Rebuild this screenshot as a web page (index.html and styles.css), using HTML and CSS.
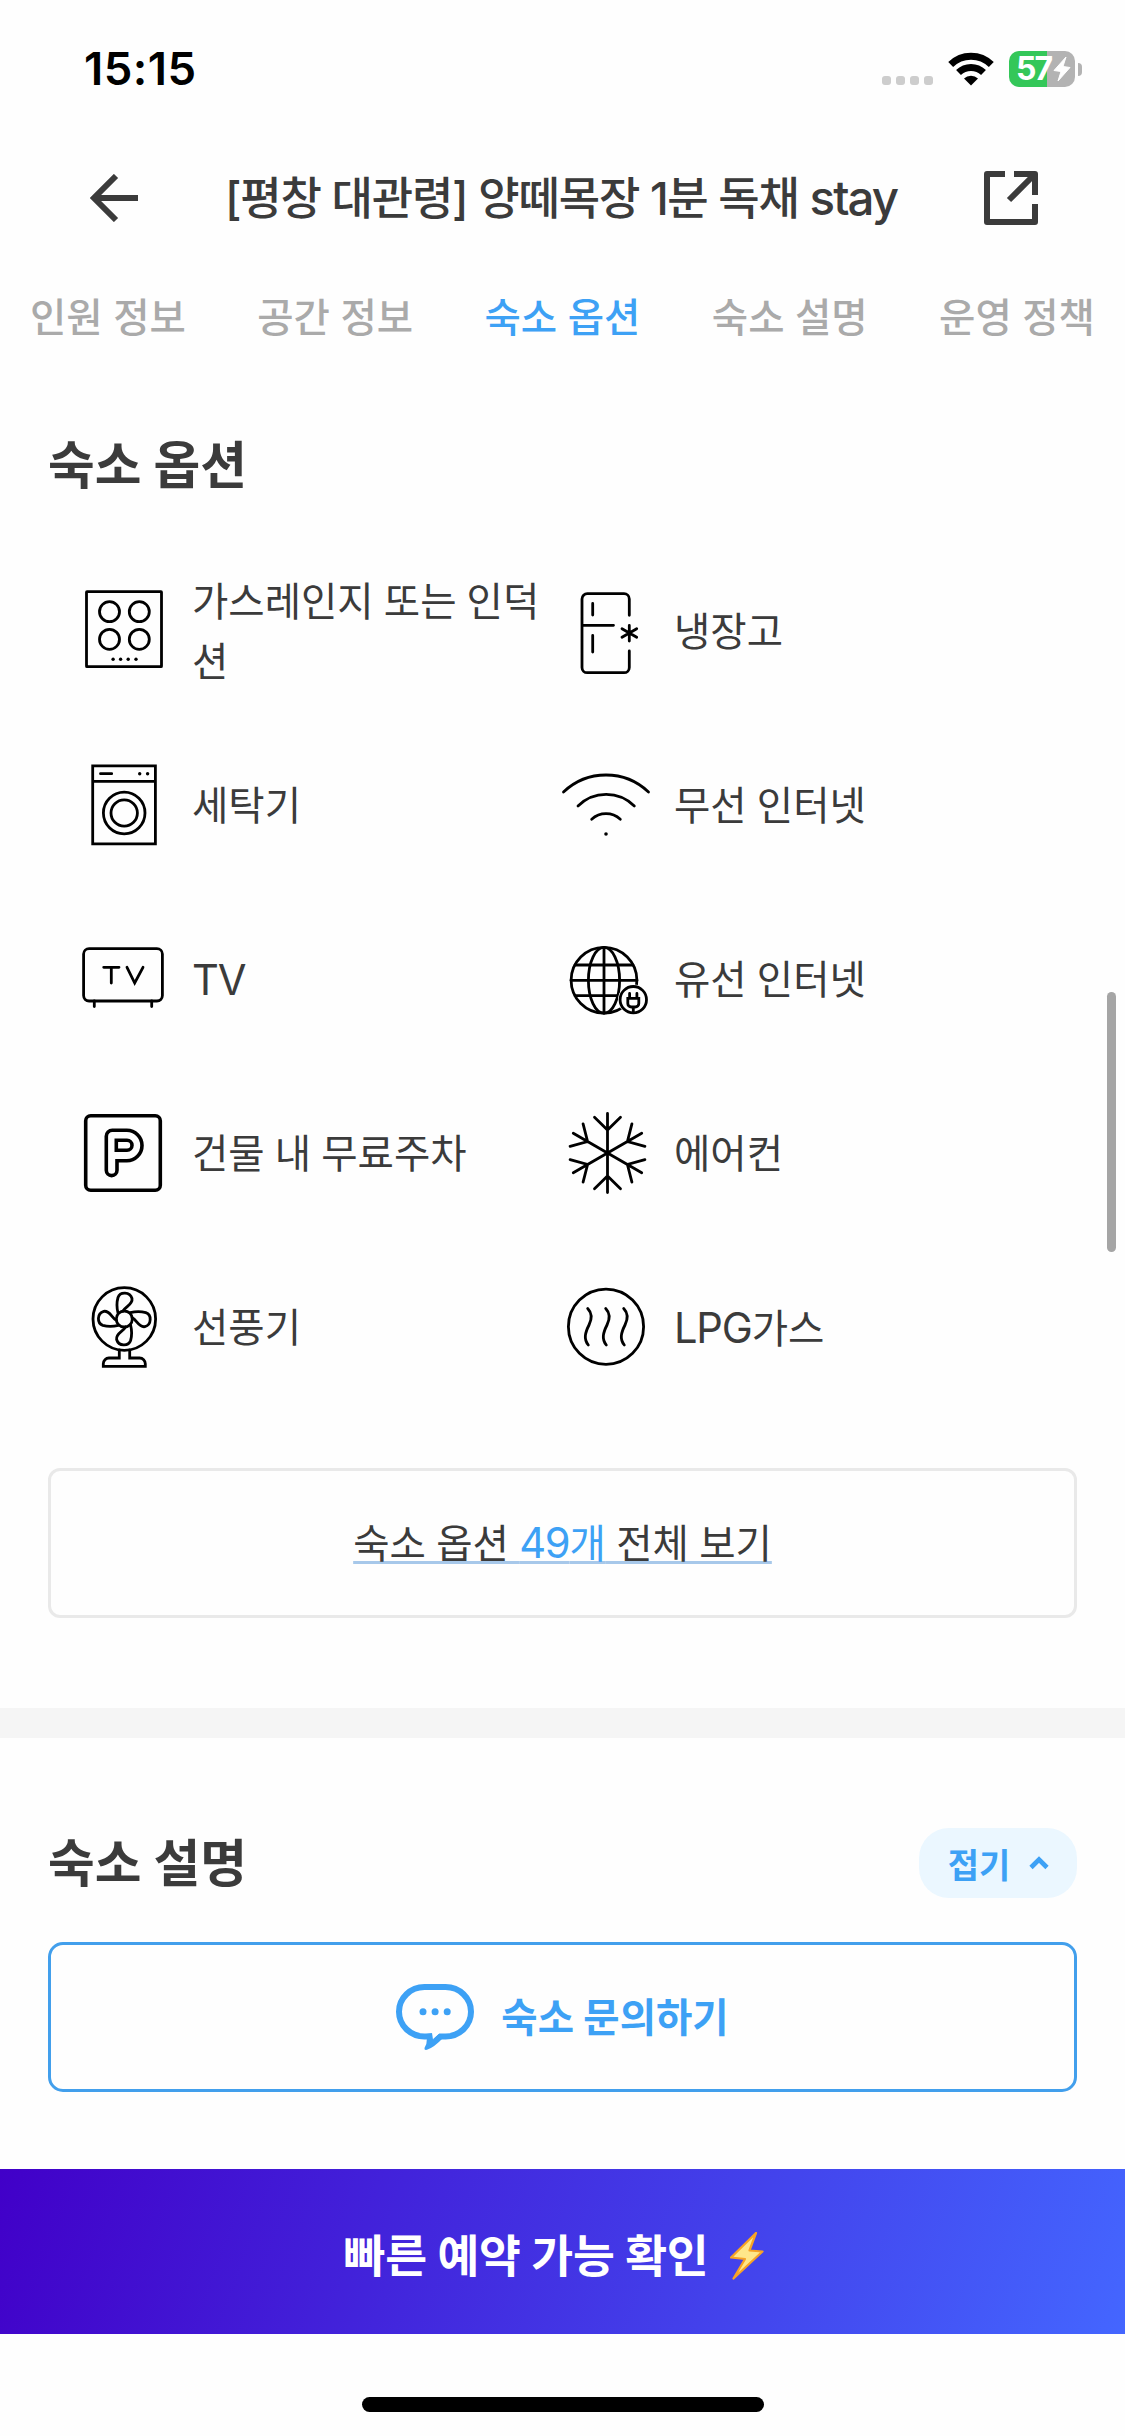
FILE: index.html
```html
<!DOCTYPE html>
<html lang="ko">
<head>
<meta charset="utf-8">
<title>숙소 옵션</title>
<link rel="stylesheet" href="styles.css">
</head>
<body>
<header class="status">
  <span class="time">15:15</span>
  <div class="status-icons">
    <div class="signal"><i></i><i></i><i></i><i></i></div>
    <svg class="wifi" width="46" height="34" viewBox="0 0 46 34">
      <g fill="none" stroke="#000" stroke-width="7"><path d="M2.7 12.6a29 29 0 0 1 40.6 0"/><path d="M10.5 20.6a18 18 0 0 1 25 0"/></g>
      <path d="M23 33.5l-7-7a10 10 0 0 1 14 0z"/>
    </svg>
    <div class="battery">
      <span class="level">57</span>
      <svg width="18" height="26" viewBox="0 0 18 26"><path d="M13 1L1 14.5l7 1L5 25l12-13.500-7-1z" fill="#fff" stroke="#fff" stroke-linejoin="round"/></svg>
    </div>
    <i class="nub"></i>
  </div>
</header>

<nav class="topbar">
  <svg width="48" height="48" viewBox="0 0 48 48" fill="none" stroke="#3b3b3b" stroke-width="6"><path d="M48 24H4M26 2L4 24l22 22"/></svg>
  <h1 class="title">[평창 대관령] 양떼목장 1분 독채 <span class="latin">stay</span></h1>
  <svg width="54" height="54" viewBox="0 0 54 54" fill="none" stroke="#3b3b3b" stroke-width="6" stroke-linejoin="round"><path d="M21 3H3V51H51V33M30 3H51V24M51 3L25 29"/></svg>
</nav>

<nav class="tabs">
  <span>인원 정보</span><span>공간 정보</span><span class="active">숙소 옵션</span><span>숙소 설명</span><span>운영 정책</span>
</nav>

<section class="options">
  <h2>숙소 옵션</h2>
  <ul class="grid">
    <li>
      <svg class="icon" viewBox="0 0 90 90"><rect x="7.500" y="5.700" width="75" height="75" rx="0.500"/><circle cx="30.500" cy="25.700" r="10"/><circle cx="60.300" cy="25.700" r="10"/><circle cx="30.500" cy="53.300" r="10"/><circle cx="60.300" cy="53.300" r="10"/><g class="dot"><circle cx="34.100" cy="73.300" r="1.700"/><circle cx="41.600" cy="73.300" r="1.700"/><circle cx="49.200" cy="73.300" r="1.700"/><circle cx="57" cy="73.300" r="1.700"/></g></svg>
      <span>가스레인지 또는 인덕션</span>
    </li>
    <li>
      <svg class="icon" viewBox="0 0 90 90"><path d="M68.300 29.300V13a5.300 5.300 0 0 0-5.300-5.300H26.300A5.300 5.300 0 0 0 21 13V81.400a5.300 5.300 0 0 0 5.300 5.300H63a5.300 5.300 0 0 0 5.300-5.300V65M21 39.300H52.500M31.700 17.500V29M31.700 49.500V66M68.300 39.500V55M61 42.700L75.700 51.300M75.700 42.700L61 51.300"/></svg>
      <span>냉장고</span>
    </li>
    <li>
      <svg class="icon" viewBox="0 0 90 90"><path d="M13.700 5.800H76.400V83.800H13.700ZM13.700 21.300H76.400M21.500 13.700H32.700"/><circle cx="45.200" cy="53" r="20.800"/><circle cx="45.200" cy="53" r="13.200"/><g class="dot"><circle cx="60.700" cy="13.700" r="1.700"/><circle cx="68.600" cy="13.700" r="1.700"/></g></svg>
      <span>세탁기</span>
    </li>
    <li>
      <svg class="icon" viewBox="0 0 90 90"><path d="M2.500 32A61.600 61.600 0 0 1 87.500 32M17 46A39.800 39.800 0 0 1 73.300 46M30.700 59.300A21 21 0 0 1 59.300 59.300"/><g class="dot"><circle cx="45" cy="74" r="1.800"/></g></svg>
      <span>무선 인터넷</span>
    </li>
    <li>
      <svg class="icon" viewBox="0 0 90 90"><rect x="4.600" y="14.600" width="78.800" height="52.400" rx="5.500"/><path d="M15.300 67V72.500M72.700 67V72.500M24.700 33.300H40M32.300 33.300V49M48 33.300L55.700 49L64 33.300"/></svg>
      <span class="latin">TV</span>
    </li>
    <li>
      <svg class="icon" viewBox="0 0 90 90"><circle cx="43" cy="46.300" r="32.900"/><ellipse cx="43" cy="46.300" rx="15.600" ry="32.900"/><path d="M43 13.400V79.200M14 31H72M10 46.300H76M14 61.700H72"/><circle cx="72.300" cy="65.700" r="15.300" fill="#fff" stroke="none"/><circle cx="72.300" cy="65.700" r="13.200"/><path d="M68.600 59.500V63M75.900 59.500V63M66.800 64.300H77.800V69.500a3.500 3.500 0 0 1-3.500 3.500H70.300a3.500 3.500 0 0 1-3.500-3.500ZM72.300 73V78"/></svg>
      <span>유선 인터넷</span>
    </li>
    <li>
      <svg class="icon bold" viewBox="0 0 90 90"><rect x="6.700" y="7.700" width="74.600" height="74.600" rx="5"/><path d="M27.300 28.300a6 6 0 0 1 6-6H47.800A15.200 15.200 0 0 1 47.800 52.700H38V62.300a5.350 5.350 0 0 1-10.700 0ZM37.300 32.300H48a5 5 0 0 1 0 10H37.300Z"/></svg>
      <span>건물 내 무료주차</span>
    </li>
    <li>
      <svg class="icon" viewBox="0 0 90 90"><defs><path id="arm" d="M46.500 45V5.500M33.500 9.300L46.500 22L59.500 9.300"/></defs><use href="#arm"/><use href="#arm" transform="rotate(60 46.500 45)"/><use href="#arm" transform="rotate(120 46.500 45)"/><use href="#arm" transform="rotate(180 46.500 45)"/><use href="#arm" transform="rotate(240 46.500 45)"/><use href="#arm" transform="rotate(300 46.500 45)"/></svg>
      <span>에어컨</span>
    </li>
    <li>
      <svg class="icon" viewBox="0 0 90 90"><defs><path id="blade" d="M39 31C37.500 25 38 19 39 15.500C41 9.500 51 9.500 53 16.500C54 22.500 47 24 44 29"/></defs><circle cx="45.300" cy="37" r="31.300"/><circle cx="45.300" cy="37" r="8"/><use href="#blade"/><use href="#blade" transform="rotate(90 45.300 37)"/><use href="#blade" transform="rotate(180 45.300 37)"/><use href="#blade" transform="rotate(270 45.300 37)"/><path d="M40.300 68V76H30a5.700 5.700 0 0 0-5.700 5.700V84.300H66.300V81.700A5.700 5.700 0 0 0 60.600 76H50.700V68"/></svg>
      <span>선풍기</span>
    </li>
    <li>
      <svg class="icon" viewBox="0 0 90 90"><defs><path id="wave" d="M26.700 26.500C31 31 31 37 28 43C24 51 22.500 57 27.300 63"/></defs><circle cx="45" cy="44.700" r="37.600"/><use href="#wave"/><use href="#wave" x="18"/><use href="#wave" x="36"/></svg>
      <span><b class="latin">LPG</b>가스</span>
    </li>
  </ul>
  <button class="all"><span>숙소 옵션 <em><b class="latin">49</b>개</em> 전체 보기</span></button>
</section>

<section class="about">
  <div class="about-head">
    <h2>숙소 설명</h2>
    <button class="fold">접기<svg width="20" height="14" viewBox="0 0 20 14" fill="none" stroke="#3da1f5" stroke-width="4.600"><path d="M2 11.500L10 3.500L18 11.500"/></svg></button>
  </div>
  <button class="ask">
    <svg width="78" height="67" viewBox="0 0 78 67" fill="#3da1f5"><rect x="3" y="3" width="72" height="49.500" rx="25.500" ry="24.700" fill="none" stroke="#3da1f5" stroke-width="6"/><path d="M35 48.500h9.500l-9 8z" fill="#fff"/><path d="M30 50L36 49L37 55.500L43.500 49.500L47 54Q38 63.500 31 65.800Q28 66.500 28.500 64Q31 60 31 54Z"/><circle cx="27" cy="27.700" r="3.500"/><circle cx="39.100" cy="27.700" r="3.500"/><circle cx="51.200" cy="27.700" r="3.500"/></svg>
    <span>숙소 문의하기</span>
  </button>
</section>

<footer>
  <button class="book"><span>빠른 예약 가능 확인</span><svg width="34" height="48" viewBox="0 0 34 48"><path d="M26 1L1 25.500L15 27L3.500 46.500L32.500 19.500L19.500 18.500Z" fill="#ffe78a" stroke="#f7a325" stroke-width="2.200" stroke-linejoin="round"/></svg></button>
  <div class="home"></div>
</footer>
<div class="scrollbar"></div>
</body>
</html>
```
FILE: styles.css
```css
* { box-sizing: border-box; margin: 0; padding: 0; }
body {
  position: relative;
  width: 1125px;
  height: 2436px;
  overflow: hidden;
  background: #fefefe;
  color: #3b3b3b;
  font-family: Inter, "Noto Sans CJK KR", sans-serif;
  font-size: 39.5px;
}
button { display: flex; align-items: center; justify-content: center; width: 100%; background: none; border: 0; font: inherit; color: inherit; }
svg { display: block; flex: none; }
b { font-weight: inherit; }
em { font-style: normal; color: #3da1f5; }
.latin { font-size: 1.055em; letter-spacing: -1.2px; }

.status { display: flex; justify-content: space-between; align-items: center; height: 138px; padding: 0 43px 0 84px; }
.time { font-size: 45.5px; font-weight: 600; line-height: 54px; color: #000; letter-spacing: 0.5px; }
.status-icons { display: flex; align-items: center; }
.signal { display: flex; gap: 5px; margin: 23px 15px 0 0; }
.signal i { width: 9px; height: 9px; border-radius: 3px; background: #cdcdcd; }
.wifi { margin-right: 15px; }
.battery { display: flex; align-items: center; width: 66px; height: 36px; padding-left: 7px; border-radius: 10px; background: linear-gradient(90deg, #34c759 58%, #b3b3b3 58%); }
.level { width: 37px; font-size: 32px; font-weight: 700; line-height: 36px; letter-spacing: -2px; color: #fff; }
.nub { width: 4px; height: 13px; margin-left: 3px; border-radius: 0 6px 6px 0; background: #b3b3b3; }

.topbar { display: flex; align-items: center; justify-content: space-between; height: 120px; padding: 0 87px 0 90px; }
.title { font-size: 45px; font-weight: 500; line-height: 60px; letter-spacing: -1.2px; white-space: nowrap; }
.title .latin { letter-spacing: -2px; }

.tabs { display: flex; justify-content: space-between; align-items: center; height: 120px; padding: 0 30px; color: #aaa; font-weight: 500; line-height: 60px; }
.tabs .active { color: #3da1f5; }

h2 { padding-top: 2px; font-size: 50.8px; font-weight: 700; line-height: 72px; }
.options { height: 1330px; padding: 50px 48px 0; }
.grid { display: grid; grid-template-columns: 482px 1fr; row-gap: 84px; margin-top: 84px; padding-left: 31px; list-style: none; }
.grid li { display: flex; align-items: center; gap: 23px; height: 90px; }
.grid li > span { width: 360px; padding-top: 2px; line-height: 60px; word-break: break-all; word-spacing: -1px; }
.icon { width: 90px; height: 90px; fill: none; stroke: #000; stroke-width: 2.8; stroke-linecap: round; }
.icon.bold { stroke-width: 3.6; }
.dot { fill: #000; stroke: none; }
.all { height: 150px; margin-top: 96px; border: 3px solid #e9e9e9; border-radius: 12px; }
.all > span { line-height: 60px; word-spacing: -0.8px; text-decoration: underline; text-decoration-color: #a7c8ea; text-decoration-thickness: 3px; text-underline-offset: 3px; text-decoration-skip-ink: none; }

.about { height: 461px; padding: 90px 48px 0; border-top: 30px solid #f5f5f5; }
.about-head { display: flex; align-items: center; justify-content: space-between; height: 70px; }
.fold { width: 158px; height: 70px; padding-left: 1px; gap: 19px; border-radius: 30px; background: #ebf7ff; color: #3da1f5; font-size: 34px; font-weight: 700; }
.ask { height: 150px; margin-top: 44px; gap: 27px; border: 3px solid #429fec; border-radius: 15px; color: #3da1f5; font-weight: 700; }
.ask span { padding-bottom: 5px; }

.book { height: 165px; padding-right: 18px; gap: 21px; background: linear-gradient(110deg, #4100c8, #4466ff); color: #fff; font-size: 45.5px; font-weight: 700; letter-spacing: -0.2px; }
.book span { padding-top: 3px; }
.book svg { margin-top: 9px; }
.home { width: 402px; height: 15px; margin: 63px auto 0; border-radius: 8px; background: #000; }
.scrollbar { position: absolute; top: 992px; right: 9px; width: 9px; height: 260px; border-radius: 5px; background: #a5a5a5; }
```
